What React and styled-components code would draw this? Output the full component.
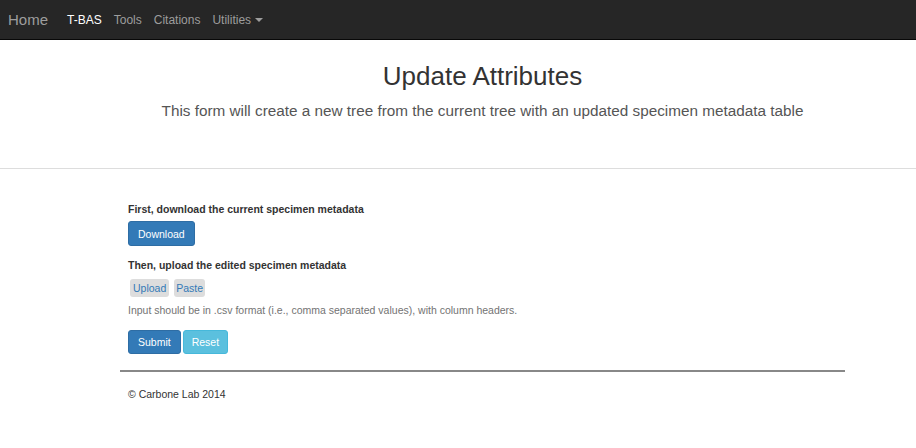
import React from 'react';
import styled, { createGlobalStyle } from 'styled-components';

const GlobalStyle = createGlobalStyle`
  body {
    margin: 0;
    background: #fff;
    font-family: "Liberation Sans", Arial, sans-serif;
    color: #333;
  }
`;

const Navbar = styled.nav`
  height: 39px;
  background: #262626;
  border-bottom: 1px solid #080808;
  display: flex;
  align-items: center;
`;

const Brand = styled.a`
  font-size: 15px;
  color: #9d9d9d;
  padding-left: 8px;
  margin-right: 13px;
  text-decoration: none;
`;

const NavItem = styled.a`
  font-size: 12px;
  padding: 0 6px;
  color: ${(p) => (p.active ? '#fff' : '#9d9d9d')};
  text-decoration: none;
  display: flex;
  align-items: center;
`;

const Caret = styled.span`
  display: inline-block;
  margin-left: 4px;
  border-top: 4px solid #9d9d9d;
  border-left: 4px solid transparent;
  border-right: 4px solid transparent;
`;

const Header = styled.header`
  padding: 22px 0 46px;
  border-bottom: 1px solid #ddd;
`;

const Container = styled.div`
  width: 725px;
  margin-left: 120px;
  text-align: ${(p) => (p.center ? 'center' : 'left')};
`;

const Title = styled.h1`
  margin: 0;
  font-size: 26px;
  font-weight: normal;
  line-height: 29px;
  color: #333;
`;

const Lead = styled.p`
  margin: 9px 0 0;
  font-size: 15.3px;
  line-height: 22px;
  color: #555;
  white-space: nowrap;
`;

const Form = styled.form`
  padding: 33px 8px 0;
`;

const Label = styled.div`
  font-size: 10.5px;
  font-weight: bold;
  line-height: 15px;
  margin-top: ${(p) => p.top || 0}px;
`;

const Row = styled.div`
  display: flex;
  gap: ${(p) => p.gap || 2}px;
  margin-top: ${(p) => p.top || 0}px;
  padding-left: ${(p) => p.indent || 0}px;
`;

const Button = styled.button`
  height: ${(p) => p.h || 25}px;
  padding: 0 ${(p) => p.px || 9}px;
  font-family: inherit;
  font-size: 10.5px;
  color: #fff;
  background: ${(p) => (p.info ? '#5bc0de' : '#337ab7')};
  border: 1px solid ${(p) => (p.info ? '#46b8da' : '#2e6da4')};
  border-radius: 3px;
  cursor: pointer;
`;

const Chip = styled.span`
  height: 18px;
  padding: 0 ${(p) => p.px || 2}px;
  display: flex;
  align-items: center;
  font-size: 10.5px;
  color: #337ab7;
  background: #ddd;
  border-radius: 3px;
`;

const Help = styled.p`
  margin: 6px 0 0;
  font-size: 10.5px;
  line-height: 15px;
  color: #737373;
`;

const Rule = styled.hr`
  margin: 16px 0 0;
  border: none;
  height: 2px;
  background: #888;
`;

const Footer = styled.footer`
  padding: 14px 8px;
  font-size: 10.5px;
  line-height: 16px;
  color: #333;
`;

export default function App() {
  return (
    <>
      <GlobalStyle />
      <Navbar>
        <Brand>Home</Brand>
        <NavItem active>T-BAS</NavItem>
        <NavItem>Tools</NavItem>
        <NavItem>Citations</NavItem>
        <NavItem>
          Utilities
          <Caret />
        </NavItem>
      </Navbar>
      <Header>
        <Container center>
          <Title>Update Attributes</Title>
          <Lead>This form will create a new tree from the current tree with an updated specimen metadata table</Lead>
        </Container>
      </Header>
      <Container>
        <Form>
          <Label>First, download the current specimen metadata</Label>
          <Row top={4}>
            <Button type="button">Download</Button>
          </Row>
          <Label top={12}>Then, upload the edited specimen metadata</Label>
          <Row top={6} gap={5} indent={2}>
            <Chip px={3}>Upload</Chip>
            <Chip px={2}>Paste</Chip>
          </Row>
          <Help>Input should be in .csv format (i.e., comma separated values), with column headers.</Help>
          <Row top={12} gap={2}>
            <Button type="button" h={24} px={9}>Submit</Button>
            <Button type="button" h={24} px={8} info>Reset</Button>
          </Row>
        </Form>
        <Rule />
        <Footer>© Carbone Lab 2014</Footer>
      </Container>
    </>
  );
}
